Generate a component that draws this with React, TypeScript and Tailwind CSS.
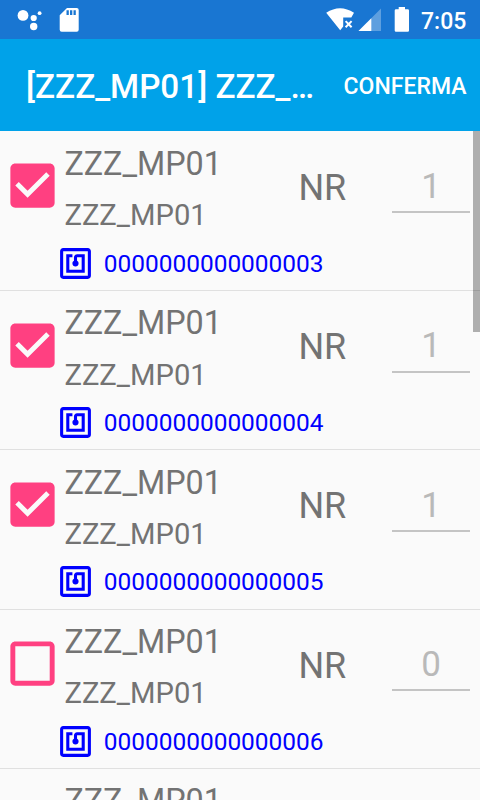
type Item = {
  name: string;
  description: string;
  unit: string;
  qty: number;
  tag: string;
  checked: boolean;
};

const items: Item[] = [
  { name: "ZZZ_MP01", description: "ZZZ_MP01", unit: "NR", qty: 1, tag: "0000000000000003", checked: true },
  { name: "ZZZ_MP01", description: "ZZZ_MP01", unit: "NR", qty: 1, tag: "0000000000000004", checked: true },
  { name: "ZZZ_MP01", description: "ZZZ_MP01", unit: "NR", qty: 1, tag: "0000000000000005", checked: true },
  { name: "ZZZ_MP01", description: "ZZZ_MP01", unit: "NR", qty: 0, tag: "0000000000000006", checked: false },
  { name: "ZZZ_MP01", description: "ZZZ_MP01", unit: "NR", qty: 0, tag: "0000000000000007", checked: false },
];

function CheckBox({ checked }: { checked: boolean }) {
  return (
    <svg viewBox="0 0 24 24" className="mt-[24.9px] ml-[2.6px] size-[59px] shrink-0 fill-[#ff4081]">
      {checked ? (
        <path d="M19 3H5c-1.11 0-2 .9-2 2v14c0 1.1.89 2 2 2h14c1.11 0 2-.9 2-2V5c0-1.1-.89-2-2-2zm-9 14l-5-5 1.41-1.41L10 14.17l7.59-7.59L19 8l-9 9z" />
      ) : (
        <path d="M19 5v14H5V5h14m0-2H5c-1.1 0-2 .9-2 2v14c0 1.1.9 2 2 2h14c1.1 0 2-.9 2-2V5c0-1.1-.9-2-2-2z" />
      )}
    </svg>
  );
}

function NfcIcon() {
  return (
    <svg viewBox="0 0 24 24" className="size-[37px] shrink-0 fill-[#0000ff]">
      <path d="M20 2H4c-1.1 0-2 .9-2 2v16c0 1.1.9 2 2 2h16c1.1 0 2-.9 2-2V4c0-1.1-.9-2-2-2zm0 18H4V4h16v16zM18 6h-5c-1.1 0-2 .9-2 2v2.28c-.6.35-1 .98-1 1.72 0 1.1.9 2 2 2s2-.9 2-2c0-.74-.4-1.38-1-1.72V8h3v8H8V8h2V6H6v12h12V6z" />
    </svg>
  );
}

function StatusBar() {
  return (
    <div className="flex h-[39px] shrink-0 items-start bg-[#1976d2] text-white">
      <svg viewBox="0 0 100 39" className="h-[39px] w-[100px] fill-white">
        <circle cx="23" cy="15.4" r="5.4" />
        <circle cx="33.7" cy="18" r="3.1" />
        <circle cx="39.6" cy="13.2" r="1.9" />
        <circle cx="33.7" cy="26.5" r="3.7" />
        <path
          fillRule="evenodd"
          d="M67 8h9.7q2 0 2 2v19.7q0 2-2 2H61.7q-2 0-2-2V15.3zM66.5 10.3v4.7h2.3v-4.7zM70 10.3v4.7h2.3v-4.7zM73.5 10.3v4.7h2.3v-4.7z"
        />
      </svg>
      <svg viewBox="320 0 92 39" className="ml-auto h-[39px] w-[92px] fill-white">
        <path d="M326.2 12.8Q340 3.5 354 12.8L351.3 17.5H343.2V26.5L340.2 30.3Z" />
        <path d="M345.6 21.1l6 6.2M351.6 21.1l-6 6.2" className="stroke-white stroke-2" />
        <path d="M381 8.5V31H358.5z" fillOpacity=".3" />
        <path d="M371.3 18.2V31H358.5z" />
        <path d="M398.7 7h6.3v2.3h2.7q1.3 0 1.3 1.3v19.8q0 1.3-1.3 1.3h-11.7q-1.3 0-1.3-1.3V10.6q0-1.3 1.3-1.3h2.7z" />
      </svg>
      <span className="mt-[8px] w-[68px] pl-[9px] text-[23px] leading-[27px] font-medium">7:05</span>
    </div>
  );
}

function Row({ item }: { item: Item }) {
  return (
    <li className="h-[159.33px] border-b border-[#e0e0e0]">
      <div className="flex h-[113.2px] items-start">
        <CheckBox checked={item.checked} />
        <div className="ml-[2.8px] w-[234px] text-[#737373]">
          <p className="mt-[13.3px] text-[32.3px] leading-[38px]">{item.name}</p>
          <p className="mt-[15.3px] text-[29.2px] leading-[35px]">{item.description}</p>
        </div>
        <span className="mt-[35.2px] w-[94px] text-[36px] leading-[42px] text-[#737373]">{item.unit}</span>
        <div className="mt-[34.5px] h-[47.1px] w-[77.5px] border-b-2 border-[#c4c4c4] text-center text-[35px] leading-[41px] text-[#b9b9b9]">
          {item.qty}
        </div>
      </div>
      <div className="flex items-center pl-[56.6px] text-[#0000ff]">
        <NfcIcon />
        <span className="ml-[10.2px] text-[24.45px] leading-[29px]">{item.tag}</span>
      </div>
    </li>
  );
}

export default function App() {
  return (
    <div className="flex h-[800px] w-[480px] flex-col overflow-hidden bg-[#fafafa] font-[Roboto,sans-serif]">
      <StatusBar />

      <header className="flex h-[92px] shrink-0 items-center justify-between bg-[#00a2e9] pt-[2px] pr-[13.5px] pl-[26px] font-medium text-white">
        <h1 className="text-[33.25px] leading-[39px]">[ZZZ_MP01] ZZZ_…</h1>
        <button className="pt-px text-[23px] leading-[28px]">CONFERMA</button>
      </header>

      <main className="relative min-h-0 flex-1 overflow-hidden">
        <ul className="pt-[0.6px]">
          {items.map((item) => (
            <Row key={item.tag} item={item} />
          ))}
        </ul>
        {/* scrollbar thumb */}
        <div className="absolute top-0 right-0 h-[201px] w-[7px] bg-black/30" />
      </main>
    </div>
  );
}
